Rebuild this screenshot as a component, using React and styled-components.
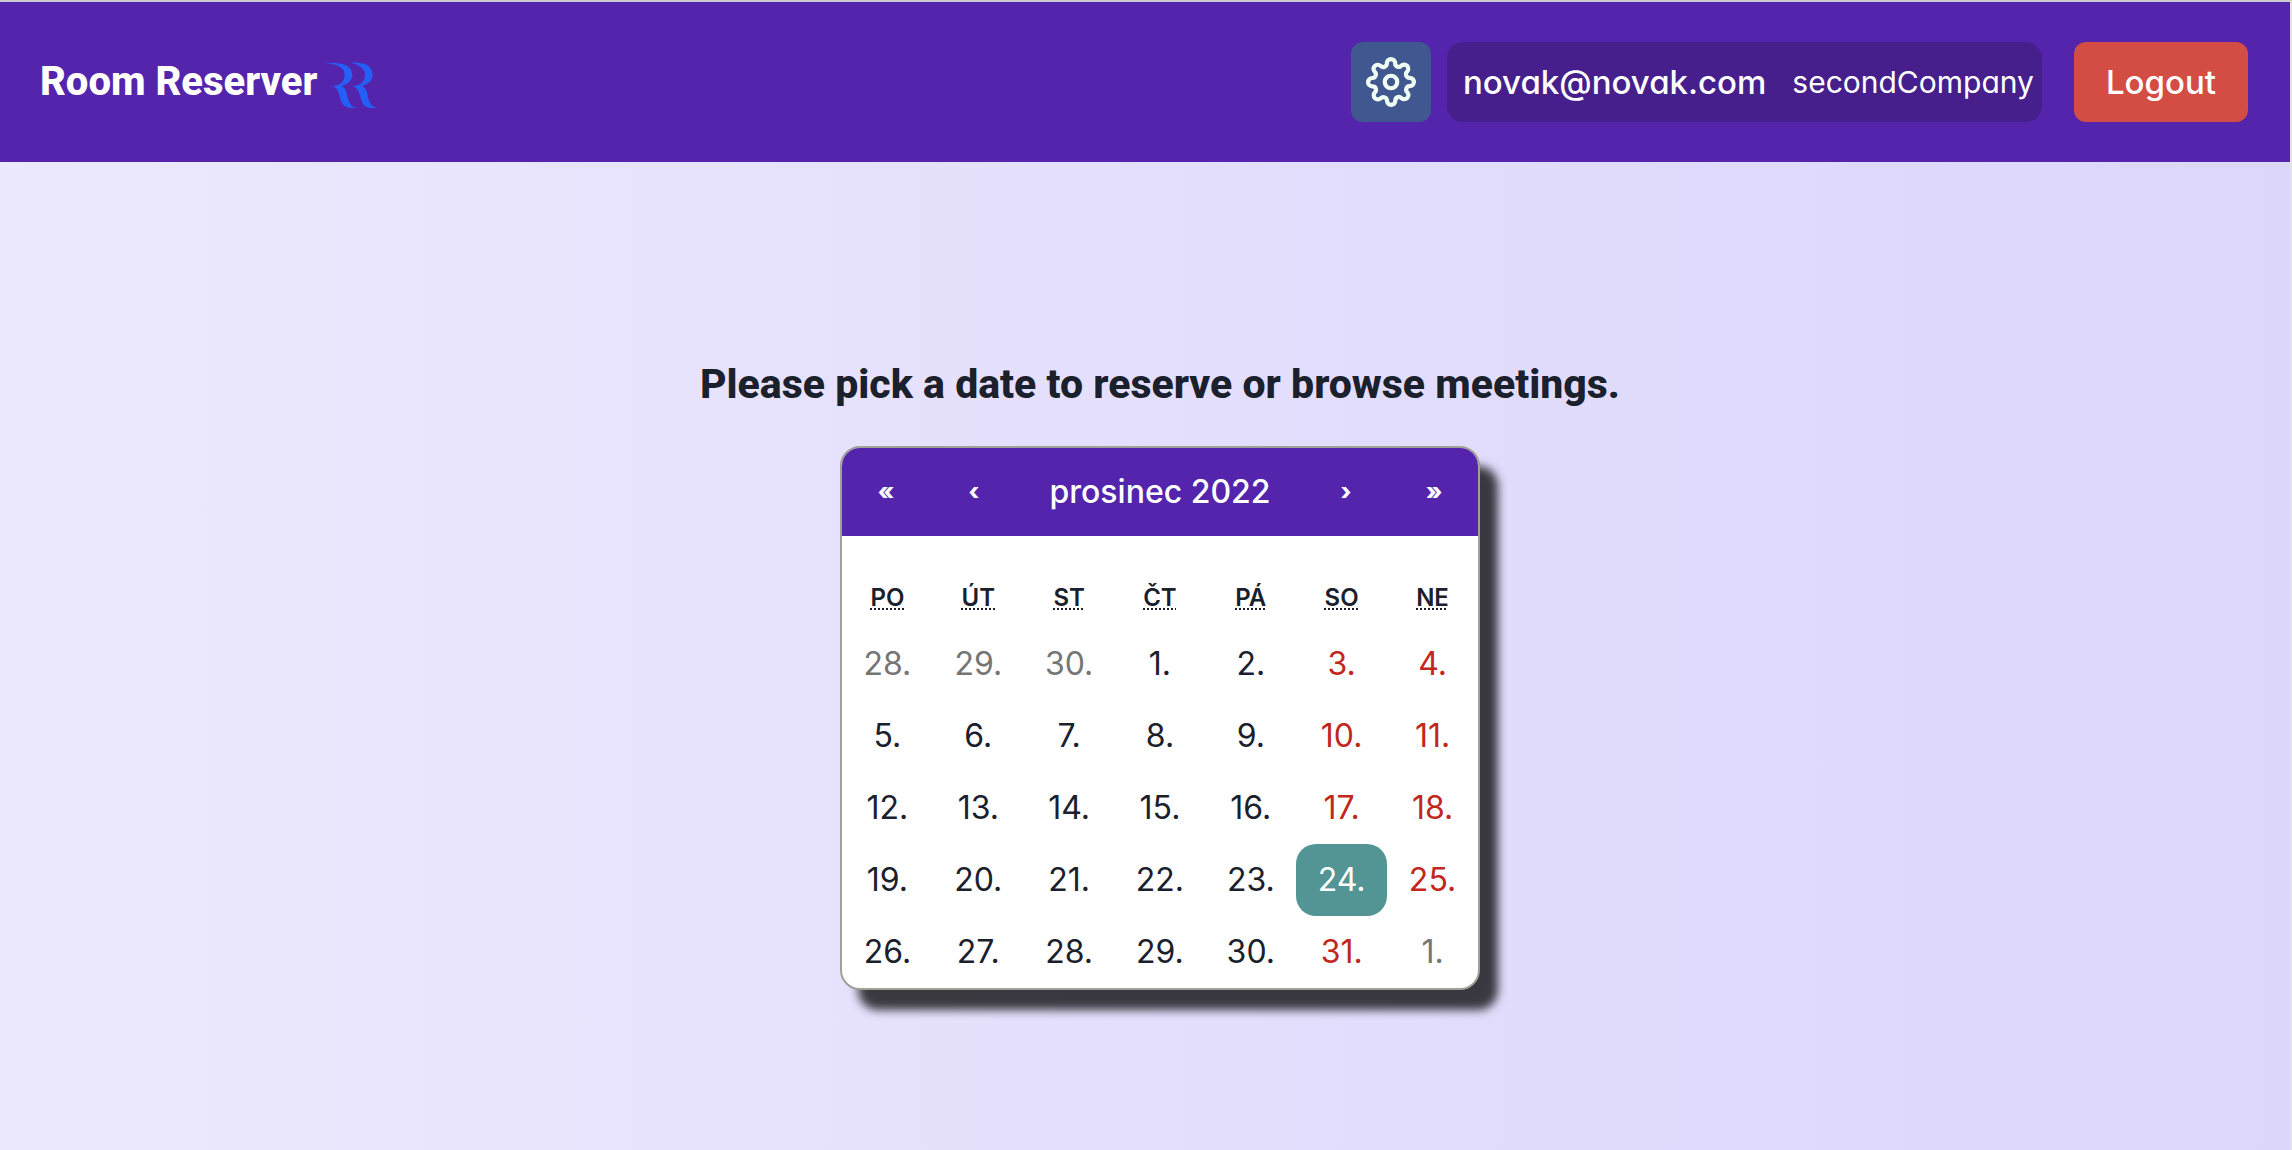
import React, { useState } from 'react';
import styled, { createGlobalStyle } from 'styled-components';
import { FiSettings } from 'react-icons/fi';

const GlobalStyle = createGlobalStyle`
  *, *::before, *::after { box-sizing: border-box; }
  body {
    margin: 0;
    color: #1a202c;
    font-family: Inter, "Noto Sans", sans-serif;
    font-feature-settings: "cv11";
    font-size: 32px;
    line-height: 1;
  }
  button {
    border: 0;
    padding: 0;
    background: none;
    color: inherit;
    font: inherit;
    font-feature-settings: inherit;
    cursor: pointer;
  }
`;

const Page = styled.div`
  display: flex;
  flex-direction: column;
  min-height: 100vh;
  border-top: 2px solid #cbcbce;
  border-right: 2px solid #e3e3e6;
  background: linear-gradient(90deg, #ece9fc 0%, #e4dffd 50%, #dcd6fa 100%);
`;

const Header = styled.header`
  display: flex;
  align-items: flex-start;
  justify-content: space-between;
  height: 160px;
  padding: 40px 42px 40px 40px;
  background: #5424ad;
  color: #fff;
`;

const Brand = styled.a`
  display: flex;
  align-items: center;
  gap: 8px;
  height: 80px;
  color: inherit;
  font-family: Roboto, "Open Sans", sans-serif;
  font-size: 40px;
  font-weight: 800;
  text-decoration: none;

  svg {
    margin-top: 8px;
  }
`;

const Account = styled.div`
  display: flex;
  align-items: center;
`;

const SettingsButton = styled.button`
  display: grid;
  place-items: center;
  width: 80px;
  height: 80px;
  margin-right: 16px;
  border-radius: 12px;
  background: #41578f;
  color: #f0fff4;
`;

const User = styled.div`
  display: flex;
  align-items: center;
  gap: 26px;
  height: 80px;
  margin-right: 32px;
  padding: 0 8px 0 16px;
  border-radius: 16px;
  background: #461f8c;
`;

const Email = styled.span`
  font-size: 33px;
  font-weight: 500;
`;

const Company = styled.span`
  font-size: 30px;
`;

const LogoutButton = styled.button`
  height: 80px;
  padding: 0 32px;
  border-radius: 12px;
  background: #d34d45;
  color: #fff;
  font-size: 33px;
  font-weight: 500;
`;

const Main = styled.main`
  display: flex;
  flex: 1;
  flex-direction: column;
  align-items: center;
  gap: 32px;
  padding: 192px 0 32px 30px;
`;

const Title = styled.h1`
  margin: 0;
  font-family: Roboto, "Open Sans", sans-serif;
  font-size: 41px;
  font-weight: 800;
  line-height: 60px;
`;

const Calendar = styled.section`
  width: 640px;
  overflow: hidden;
  border: 2px solid #a0a096;
  border-radius: 20px;
  background: #fff;
  box-shadow: 18px 20px 10px rgba(0, 0, 0, 0.75);
`;

const Navigation = styled.div`
  display: flex;
  height: 88px;
  margin-bottom: 32px;
  background: #5424ad;
  color: #fff;
`;

const Arrow = styled.button`
  width: 88px;
  font-size: 24px;
  font-weight: 800;
`;

const Month = styled.button`
  flex: 1;
  font-weight: 500;
`;

const Days = styled.table`
  width: 100%;
  border-spacing: 0;
  table-layout: fixed;
`;

const Weekday = styled.th`
  height: 60px;
  padding: 0;
  font-size: 24px;
  font-weight: 600;

  abbr {
    text-decoration: underline dotted 2px;
    text-underline-offset: 2px;
    text-decoration-skip-ink: none;
  }
`;

const DayCell = styled.td`
  padding: 0;
`;

const dayColor = ({ $selected, $outside, $weekend }) => {
  if ($selected) return '#fff';
  if ($outside) return '#757575';
  return $weekend ? '#c1271d' : '#1a202c';
};

const Day = styled.button`
  display: block;
  width: 100%;
  height: 72px;
  border-radius: 20px;
  background: ${(p) => (p.$selected ? '#529594' : 'transparent')};
  color: ${dayColor};
`;

const WEEKDAYS = [
  ['PO', 'pondělí'],
  ['ÚT', 'úterý'],
  ['ST', 'středa'],
  ['ČT', 'čtvrtek'],
  ['PÁ', 'pátek'],
  ['SO', 'sobota'],
  ['NE', 'neděle'],
];

const WEEKS = Array.from({ length: 5 }, (_, week) =>
  Array.from({ length: 7 }, (_, day) => {
    const date = new Date(2022, 10, 28 + week * 7 + day);
    return {
      key: `${date.getMonth()}-${date.getDate()}`,
      number: date.getDate(),
      outside: date.getMonth() !== 11,
      weekend: day > 4,
    };
  })
);

function Logo() {
  return (
    <svg width="54" height="48" viewBox="12 37 162 144" fill="#245ff6" aria-hidden="true">
      <path d="M12 40C60 37 94 46 94 76C94 93 79 104 62 109C79 118 76 134 82 150C87 165 95 173 110 174L88 174C68 173 61 160 57 144C53 128 50 112 30 109C54 109 71 99 71 75C71 54 50 43 12 40Z" />
      <path d="M90 39C126 37 155 46 155 76C155 93 140 104 123 109C140 118 138 134 143 150C148 165 156 173 172 176L149 175C130 173 123 160 119 144C114 128 111 112 91 109C115 109 132 99 132 75C132 57 117 46 90 39Z" />
    </svg>
  );
}

export default function App() {
  const [selected, setSelected] = useState('11-24');

  return (
    <Page>
      <GlobalStyle />
      <Header>
        <Brand href="#">
          Room Reserver
          <Logo />
        </Brand>
        <Account>
          <SettingsButton aria-label="Settings">
            <FiSettings size={50} />
          </SettingsButton>
          <User>
            <Email>novak@novak.com</Email>
            <Company>secondCompany</Company>
          </User>
          <LogoutButton>Logout</LogoutButton>
        </Account>
      </Header>
      <Main>
        <Title>Please pick a date to reserve or browse meetings.</Title>
        <Calendar aria-label="Calendar">
          <Navigation>
            <Arrow>«</Arrow>
            <Arrow>‹</Arrow>
            <Month>prosinec 2022</Month>
            <Arrow>›</Arrow>
            <Arrow>»</Arrow>
          </Navigation>
          <Days>
            <thead>
              <tr>
                {WEEKDAYS.map(([short, name]) => (
                  <Weekday key={short} scope="col">
                    <abbr title={name}>{short}</abbr>
                  </Weekday>
                ))}
              </tr>
            </thead>
            <tbody>
              {WEEKS.map((week) => (
                <tr key={week[0].key}>
                  {week.map((day) => (
                    <DayCell key={day.key}>
                      <Day
                        $selected={day.key === selected}
                        $outside={day.outside}
                        $weekend={day.weekend}
                        onClick={() => setSelected(day.key)}
                      >
                        {day.number}.
                      </Day>
                    </DayCell>
                  ))}
                </tr>
              ))}
            </tbody>
          </Days>
        </Calendar>
      </Main>
    </Page>
  );
}
